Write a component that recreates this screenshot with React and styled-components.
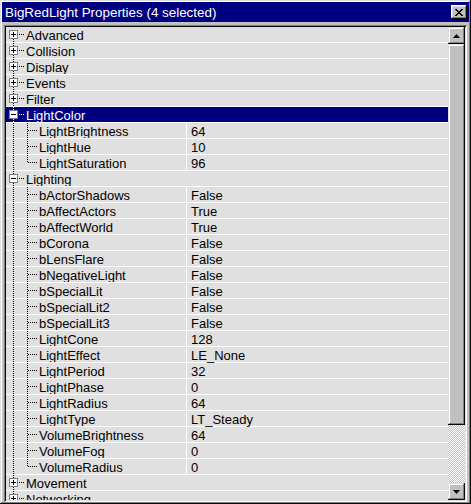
import React from 'react';
import styled, { createGlobalStyle } from 'styled-components';

const GlobalStyle = createGlobalStyle`
    html, body {
        margin: 0;
        padding: 0;
        background: #c0c0c0;
    }
    * {
        box-sizing: border-box;
    }
`;

const Window = styled.div`
    width: 471px;
    height: 504px;
    background: #c0c0c0;
    display: flex;
    flex-direction: column;
    padding: 2px;
    gap: 3px;
    box-shadow: inset -1px -1px #0a0a0a, inset 1px 1px #dfdfdf, inset -2px -2px #808080, inset 2px 2px #ffffff;
    font-family: "Liberation Sans", Arial, sans-serif;
    overflow: hidden;
`;

const TitleBar = styled.div`
    height: 20px;
    flex: none;
    background: #000080;
    color: #ffffff;
    display: flex;
    align-items: center;
    justify-content: space-between;
    padding: 0 2px 0 3px;
    font-size: 13.4px;
`;

const CloseButton = styled.div`
    width: 16px;
    height: 14px;
    background: #c0c0c0;
    display: flex;
    align-items: center;
    justify-content: center;
    box-shadow: inset -1px -1px #0a0a0a, inset 1px 1px #ffffff, inset -2px -2px #808080, inset 2px 2px #dfdfdf;
`;

const ListBox = styled.div`
    flex: 1;
    margin: 0 2px 0 2px;
    padding: 2px;
    display: flex;
    min-height: 0;
    box-shadow: inset 1px 1px #808080, inset -1px -1px #ffffff, inset 2px 2px #0a0a0a, inset -2px -2px #dfdfdf;
`;

const Rows = styled.div`
    flex: 1;
    overflow: hidden;
    background: #e0e0e0;
`;

const Row = styled.div`
    height: 16px;
    display: flex;
    align-items: stretch;
    border-bottom: 1px solid #ffffff;
    background: ${p => (p.selected ? '#000080' : '#e0e0e0')};
    color: ${p => (p.selected ? '#ffffff' : '#000000')};
    font-size: 13px;
    line-height: 15px;
`;

const NameCell = styled.div`
    width: ${p => (p.full ? 'auto' : '180px')};
    flex: ${p => (p.full ? '1' : 'none')};
    display: flex;
    white-space: nowrap;
    overflow: hidden;
`;

const ValueCell = styled.div`
    flex: 1;
    border-left: 1px solid #ffffff;
    padding: 1px 0 0 4px;
    white-space: nowrap;
`;

const Label = styled.span`
    padding-top: 1px;
`;

const ScrollBar = styled.div`
    width: 17px;
    flex: none;
    display: flex;
    flex-direction: column;
`;

const ScrollButton = styled.div`
    height: 17px;
    flex: none;
    background: #c0c0c0;
    display: flex;
    align-items: center;
    justify-content: center;
    box-shadow: inset -1px -1px #0a0a0a, inset 1px 1px #dfdfdf, inset -2px -2px #808080, inset 2px 2px #ffffff;
`;

const Thumb = styled.div`
    height: ${p => p.size}px;
    flex: none;
    background: #c0c0c0;
    box-shadow: inset -1px -1px #0a0a0a, inset 1px 1px #dfdfdf, inset -2px -2px #808080, inset 2px 2px #ffffff;
`;

const Track = styled.div`
    flex: 1;
    background-color: #c0c0c0;
    background-image: conic-gradient(#ffffff 25%, #c0c0c0 0 50%, #ffffff 0 75%, #c0c0c0 0);
    background-size: 2px 2px;
`;

const properties = [
    { name: 'Advanced' },
    { name: 'Collision' },
    { name: 'Display' },
    { name: 'Events' },
    { name: 'Filter' },
    {
        name: 'LightColor',
        open: true,
        selected: true,
        children: [
            ['LightBrightness', '64'],
            ['LightHue', '10'],
            ['LightSaturation', '96'],
        ],
    },
    {
        name: 'Lighting',
        open: true,
        children: [
            ['bActorShadows', 'False'],
            ['bAffectActors', 'True'],
            ['bAffectWorld', 'True'],
            ['bCorona', 'False'],
            ['bLensFlare', 'False'],
            ['bNegativeLight', 'False'],
            ['bSpecialLit', 'False'],
            ['bSpecialLit2', 'False'],
            ['bSpecialLit3', 'False'],
            ['LightCone', '128'],
            ['LightEffect', 'LE_None'],
            ['LightPeriod', '32'],
            ['LightPhase', '0'],
            ['LightRadius', '64'],
            ['LightType', 'LT_Steady'],
            ['VolumeBrightness', '64'],
            ['VolumeFog', '0'],
            ['VolumeRadius', '0'],
        ],
    },
    { name: 'Movement' },
    { name: 'Networking' },
];

// dotted tree connectors, drawn per row
const CategoryGlyph = ({ open, first, light }) => {
    const c = light ? '#ffffff' : '#000000';
    return (
        <svg width="20" height="15" style={{ flex: 'none' }} shapeRendering="crispEdges">
            <line x1="7.5" y1={first ? 8 : 0} x2="7.5" y2="15" stroke={c} strokeDasharray="1 1" />
            <line x1="13" y1="7.5" x2="19" y2="7.5" stroke={c} strokeDasharray="1 1" />
            <rect x="3.5" y="3.5" width="8" height="8" fill="#ffffff" stroke="#808080" />
            <line x1="5" y1="7.5" x2="10" y2="7.5" stroke="#000000" />
            {!open && <line x1="7.5" y1="5" x2="7.5" y2="10" stroke="#000000" />}
        </svg>
    );
};

const ChildGlyph = ({ last }) => (
    <svg width="33" height="15" style={{ flex: 'none' }} shapeRendering="crispEdges">
        <line x1="7.5" y1="0" x2="7.5" y2="15" stroke="#000000" strokeDasharray="1 1" />
        <line x1="21.5" y1="0" x2="21.5" y2={last ? 8 : 15} stroke="#000000" strokeDasharray="1 1" />
        <line x1="22" y1="7.5" x2="32" y2="7.5" stroke="#000000" strokeDasharray="1 1" />
    </svg>
);

const Arrow = ({ down }) => (
    <svg width="7" height="4" viewBox="0 0 7 4">
        <polygon points={down ? '0,0 7,0 3.5,4' : '0,4 7,4 3.5,0'} fill="#000000" />
    </svg>
);

export default function App() {
    return (
        <>
            <GlobalStyle />
            <Window>
                <TitleBar>
                    <span>BigRedLight Properties (4 selected)</span>
                    <CloseButton>
                        <svg width="8" height="7" viewBox="0 0 8 7" shapeRendering="crispEdges">
                            <path d="M0 0h2v1h1v1h2V1h1V0h2v1H7v1H6v1H5v1h1v1h1v1h1v1H6V6H5V5H3v1H2v1H0V6h1V5h1V4h1V3H2V2H1V1H0z" fill="#000000" />
                        </svg>
                    </CloseButton>
                </TitleBar>
                <ListBox>
                    <Rows>
                        {properties.map((cat, i) => (
                            <React.Fragment key={cat.name}>
                                <Row selected={cat.selected}>
                                    <NameCell full>
                                        <CategoryGlyph open={cat.open} first={i === 0} light={cat.selected} />
                                        <Label>{cat.name}</Label>
                                    </NameCell>
                                </Row>
                                {cat.open &&
                                    cat.children.map(([name, value], j) => (
                                        <Row key={name}>
                                            <NameCell>
                                                <ChildGlyph last={j === cat.children.length - 1} />
                                                <Label>{name}</Label>
                                            </NameCell>
                                            <ValueCell>{value}</ValueCell>
                                        </Row>
                                    ))}
                            </React.Fragment>
                        ))}
                    </Rows>
                    <ScrollBar>
                        <ScrollButton>
                            <Arrow />
                        </ScrollButton>
                        <Thumb size={381} />
                        <Track />
                        <ScrollButton>
                            <Arrow down />
                        </ScrollButton>
                    </ScrollBar>
                </ListBox>
            </Window>
        </>
    );
}
